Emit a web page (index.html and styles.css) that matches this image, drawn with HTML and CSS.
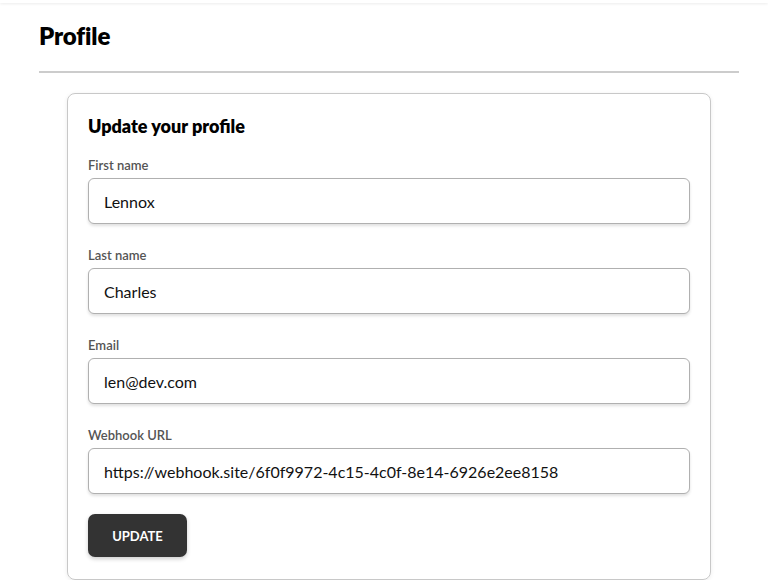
FILE: index.html
```html
<!DOCTYPE html>
<html>
<head>
<meta charset="utf-8">
<link rel="stylesheet" href="styles.css">
</head>
<body>
<div class="topbar"></div>
<main class="page">
  <h1 class="title">Profile</h1>
  <hr class="divider">
  <section class="card">
    <h2 class="card-title">Update your profile</h2>
    <form class="form">
      <div class="field">
        <label class="label">First name</label>
        <input class="input" type="text" value="Lennox">
      </div>
      <div class="field">
        <label class="label">Last name</label>
        <input class="input" type="text" value="Charles">
      </div>
      <div class="field">
        <label class="label">Email</label>
        <input class="input" type="text" value="len@dev.com">
      </div>
      <div class="field">
        <label class="label">Webhook URL</label>
        <input class="input" type="text" value="https://webhook.site/6f0f9972-4c15-4c0f-8e14-6926e2ee8158">
      </div>
      <div class="actions">
        <button class="button" type="button">UPDATE</button>
      </div>
    </form>
  </section>
</main>
</body>
</html>
```

FILE: styles.css
```css
* { box-sizing: border-box; }
html, body {
  margin: 0;
  padding: 0;
  background: #fff;
  font-family: "Lato", "Open Sans", sans-serif;
  color: #000;
}
.topbar {
  height: 3px;
  background: #fff;
  box-shadow: 0 1px 3px rgba(0,0,0,0.08);
}
.page {
  padding: 0 29px 0 39px;
}
.title {
  margin: 18px 0 0;
  font-size: 24px;
  font-weight: 800;
  line-height: 30px;
  letter-spacing: -0.1px;
}
.divider {
  margin: 20px 0 0;
  border: none;
  height: 2px;
  background: #cccccc;
}
.card {
  margin: 20px 28px 0 28px;
  border: 1px solid #c8c8c8;
  border-radius: 8px;
  padding: 20px 20px 22px;
  box-shadow: 0 1px 4px rgba(0,0,0,0.08);
}
.card-title {
  margin: 0;
  font-size: 18px;
  font-weight: 800;
  line-height: 24px;
}
.form {
  display: flex;
  flex-direction: column;
  gap: 24px;
  margin-top: 20px;
}
.field {
  display: flex;
  flex-direction: column;
  gap: 6px;
}
.label {
  font-size: 13px;
  font-weight: 600;
  color: #555;
  line-height: 14px;
}
.input {
  height: 46px;
  border: 1px solid #b0b0b0;
  border-radius: 6px;
  padding: 0 15px;
  font-family: inherit;
  font-size: 16px;
  color: #111;
  box-shadow: 0 2px 3px rgba(0,0,0,0.12);
  outline: none;
}
.actions {
  margin-top: -4px;
}
.button {
  width: 99px;
  height: 43px;
  background: #333;
  color: #fff;
  border: none;
  border-radius: 7px;
  font-family: inherit;
  font-size: 13px;
  font-weight: 700;
  box-shadow: 0 2px 4px rgba(0,0,0,0.2);
}
```
